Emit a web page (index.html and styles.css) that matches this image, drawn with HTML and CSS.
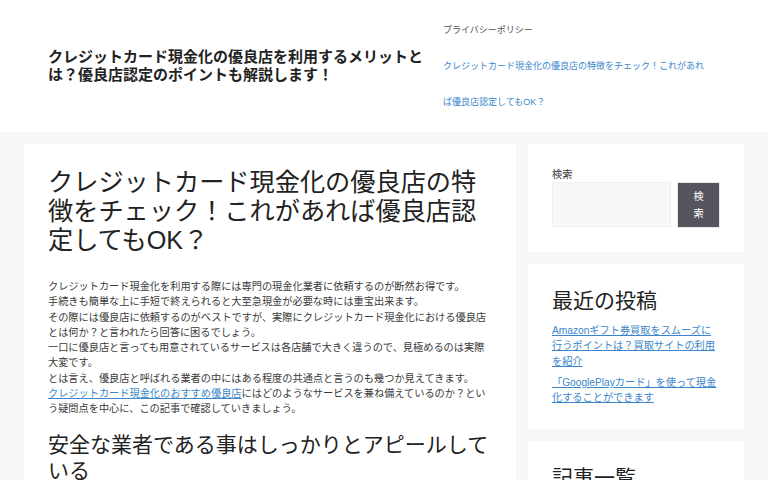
FILE: index.html
```html
<!DOCTYPE html>
<html lang="ja">
<head>
<meta charset="utf-8">
<title>クレジットカード現金化の優良店を利用するメリットとは？</title>
<link rel="stylesheet" href="styles.css">
</head>
<body>
<header class="site-header">
  <div class="site-title">クレジットカード現金化の優良店を利用するメリットとは？優良店認定のポイントも解説します！</div>
  <nav class="main-nav">
    <ul>
      <li><a href="#">プライバシーポリシー</a></li>
      <li class="current"><a href="#">クレジットカード現金化の優良店の特徴をチェック！これがあれば優良店認定してもOK？</a></li>
    </ul>
  </nav>
</header>
<div class="site-content">
  <main class="content-area">
    <article class="post">
      <h1 class="entry-title">クレジットカード現金化の優良店の特徴をチェック！これがあれば優良店認定してもOK？</h1>
      <div class="entry-content">
        <p>クレジットカード現金化を利用する際には専門の現金化業者に依頼するのが断然お得です。<br>手続きも簡単な上に手短で終えられると大至急現金が必要な時には重宝出来ます。<br>その際には優良店に依頼するのがベストですが、実際にクレジットカード現金化における優良店とは何か？と言われたら回答に困るでしょう。<br>一口に優良店と言っても用意されているサービスは各店舗で大きく違うので、見極めるのは実際大変です。<br>とは言え、優良店と呼ばれる業者の中にはある程度の共通点と言うのも幾つか見えてきます。<br><a href="#">クレジットカード現金化のおすすめ優良店</a>にはどのようなサービスを兼ね備えているのか？という疑問点を中心に、この記事で確認していきましょう。</p>
        <h2>安全な業者である事はしっかりとアピールしている</h2>
      </div>
    </article>
  </main>
  <aside class="sidebar">
    <section class="widget">
      <form class="search-form">
        <label class="search-label">検索</label>
        <div class="search-row">
          <input class="search-field" type="search" aria-label="検索">
          <button class="search-submit" type="button">検索</button>
        </div>
      </form>
    </section>
    <section class="widget">
      <h2 class="widget-title">最近の投稿</h2>
      <ul class="post-list">
        <li><a href="#">Amazonギフト券買取をスムーズに行うポイントは？買取サイトの利用を紹介</a></li>
        <li><a href="#">「GooglePlayカード」を使って現金化することができます</a></li>
      </ul>
    </section>
    <section class="widget">
      <h2 class="widget-title">記事一覧</h2>
    </section>
  </aside>
</div>
</body>
</html>
```
FILE: styles.css
```css
* { box-sizing: border-box; }
html, body { margin: 0; padding: 0; }
body {
  background: #f7f8f9;
  color: #222222;
  font-family: "Liberation Sans", "Noto Sans CJK JP", sans-serif;
  font-size: 10.2px;
  line-height: 1.5;
}
a { color: #3a86cc; }

.site-header {
  background: #ffffff;
  display: flex;
  align-items: center;
  padding: 12px 48px 12px 48px;
}
.site-title {
  flex: 1;
  min-width: 0;
  font-size: 15px;
  font-weight: 700;
  line-height: 18px;
  color: #222222;
}
.main-nav { flex: 0 0 289px; }
.main-nav ul { list-style: none; margin: 0; padding: 0; }
.main-nav a {
  display: block;
  padding: 0 12px;
  font-size: 9px;
  line-height: 36px;
  color: #515151;
  text-decoration: none;
}
.main-nav .current a { color: #3a86cc; }

.site-content {
  display: flex;
  align-items: flex-start;
  gap: 12px;
  padding: 12px 24px 0 24px;
}
.content-area { flex: 0 0 492px; min-width: 0; }
.post {
  background: #ffffff;
  padding: 24px;
}
.entry-title {
  margin: 0 0 24px 0;
  font-size: 25.2px;
  font-weight: 400;
  line-height: 29px;
  color: #222222;
}
.entry-content p {
  margin: 0 0 15px 0;
  color: #3a3a3a;
}
.entry-content h2 {
  margin: 0;
  font-size: 21px;
  font-weight: 400;
  line-height: 26px;
  color: #222222;
}

.sidebar {
  flex: 0 0 216px;
  min-width: 0;
  display: flex;
  flex-direction: column;
  gap: 12px;
}
.widget {
  background: #ffffff;
  padding: 24px;
}
.search-label {
  display: block;
  font-size: 10.2px;
  line-height: 13px;
  color: #3a3a3a;
  margin-bottom: 1px;
}
.search-row {
  display: flex;
  gap: 6px;
}
.search-field {
  flex: 1;
  min-width: 0;
  margin: 0;
  border: 1px solid #eef0f1;
  background: #f7f8f9;
  height: 45px;
}
.search-submit {
  flex: 0 0 43px;
  margin: 0;
  border: 1px solid #e8e8e8;
  background: #55555e;
  color: #ffffff;
  font-family: "Liberation Sans", "Noto Sans CJK JP", sans-serif;
  font-size: 10.2px;
  line-height: 17px;
  padding: 5px 11px;
}
.widget-title {
  margin: 0 0 9px 0;
  font-size: 21px;
  font-weight: 400;
  line-height: 26px;
  color: #222222;
}
.post-list {
  list-style: none;
  margin: 0;
  padding: 0;
}
.post-list li { margin-bottom: 6px; }
.post-list li:last-child { margin-bottom: 0; }
```
